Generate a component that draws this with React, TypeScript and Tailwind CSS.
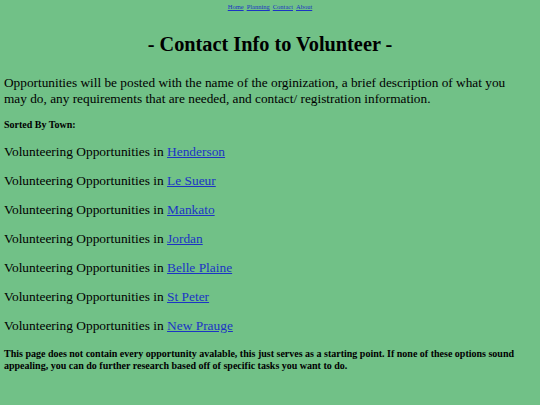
const towns = ['Henderson', 'Le Sueur', 'Mankato', 'Jordan', 'Belle Plaine', 'St Peter', 'New Prauge'];

export default function App() {
  return (
    <div className="min-h-[405px] bg-[#71c187] px-1 text-black" style={{ fontFamily: '"Liberation Serif", "Times New Roman", serif' }}>
      <nav className="flex justify-center gap-[3px] pt-[3px] text-[6.5px] leading-[8px]">
        <a href="#" className="text-[#1c34c4] underline">Home</a>
        <a href="#" className="text-[#1c34c4] underline">Planning</a>
        <a href="#" className="text-[#1c34c4] underline">Contact</a>
        <a href="#" className="text-[#1c34c4] underline">About</a>
      </nav>
      <h1 className="mt-[20px] text-center text-[20.3px] leading-[26px] font-bold">- Contact Info to Volunteer -</h1>
      <p className="mt-[18px] pr-[20px] text-[13.3px] leading-[16px]">
        Opportunities will be posted with the name of the orginization, a brief description of what you may do, any
        requirements that are needed, and contact/ registration information.
      </p>
      <h4 className="mt-[12px] text-[10px] leading-[12px] font-bold">Sorted By Town:</h4>
      <div className="mt-[12px] flex flex-col gap-[11px]">
        {towns.map((t) => (
          <p key={t} className="text-[13.4px] leading-[18px]">
            Volunteering Opportunities in{' '}
            <a href="#" className="text-[#1c34c4] underline">
              {t}
            </a>
          </p>
        ))}
      </div>
      <p className="mt-[13px] text-[10px] leading-[12px] font-bold">
        This page does not contain every opportunity avalable, this just serves as a starting point. If none of these
        options sound appealing, you can do further research based off of specific tasks you want to do.
      </p>
    </div>
  );
}
